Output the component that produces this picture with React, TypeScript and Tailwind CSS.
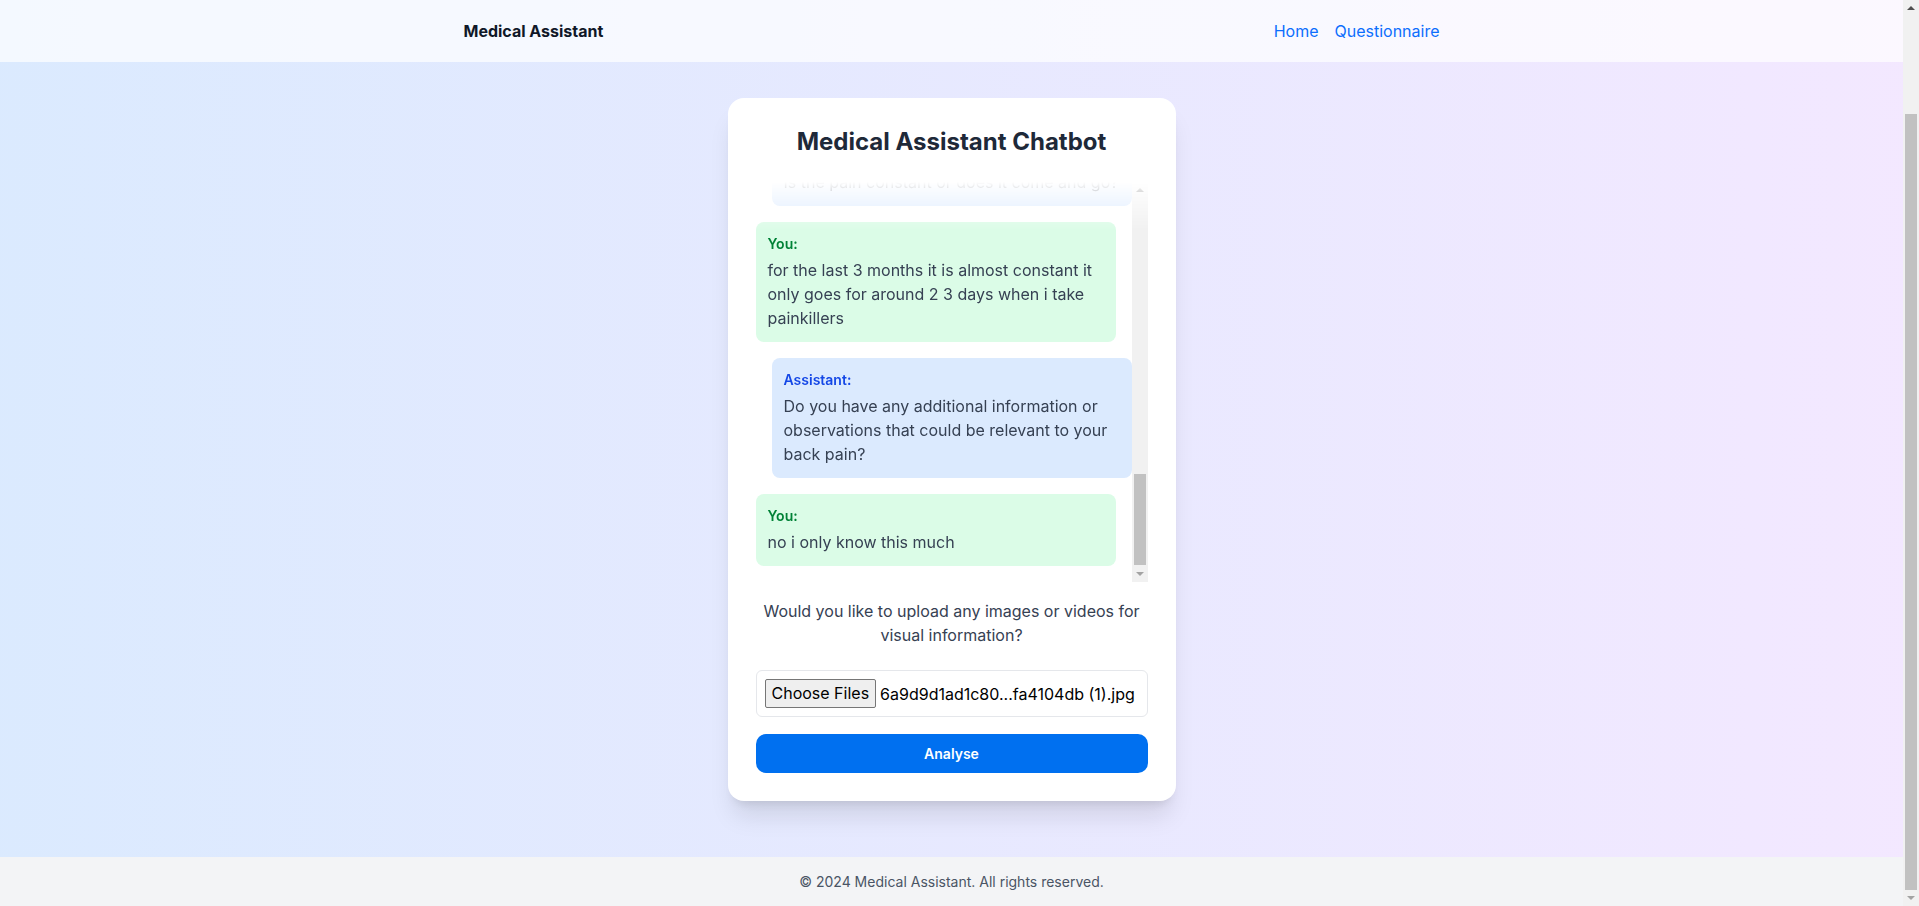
type Message = { role: "user" | "assistant"; text: string };

const messages: Message[] = [
    { role: "assistant", text: "Have you had any injuries or accidents that could have caused the pain?" },
    { role: "user", text: "no i don't remember any injury" },
    { role: "assistant", text: "Is the pain constant or does it come and go?" },
    {
        role: "user",
        text: "for the last 3 months it is almost constant it only goes for around 2 3 days when i take painkillers",
    },
    {
        role: "assistant",
        text: "Do you have any additional information or observations that could be relevant to your back pain?",
    },
    { role: "user", text: "no i only know this much" },
];

const ChatBubble = ({ message }: { message: Message }) => {
    const isUser = message.role === "user";
    return (
        <div className={isUser ? "mr-4 shrink-0 rounded-lg bg-green-100 p-3" : "ml-4 shrink-0 rounded-lg bg-blue-100 p-3"}>
            <p className={isUser ? "mb-1 text-sm font-semibold text-green-700" : "mb-1 text-sm font-semibold text-blue-700"}>
                {isUser ? "You:" : "Assistant:"}
            </p>
            <p className="text-base leading-6 text-gray-700">{message.text}</p>
        </div>
    );
};

// scrollbar drawn by hand (classic chromium look), scrolled to the end
const ArrowUp = ({ dim }: { dim?: boolean }) => (
    <div className="flex h-4 items-center justify-center">
        <div
            className={
                dim
                    ? "h-0 w-0 border-x-[4px] border-b-[4px] border-x-transparent border-b-[#a3a3a3]"
                    : "h-0 w-0 border-x-[4px] border-b-[4px] border-x-transparent border-b-[#505050]"
            }
        />
    </div>
);

const ArrowDown = ({ dim }: { dim?: boolean }) => (
    <div className="flex h-4 items-center justify-center">
        <div
            className={
                dim
                    ? "h-0 w-0 border-x-[4px] border-t-[4px] border-x-transparent border-t-[#a3a3a3]"
                    : "h-0 w-0 border-x-[4px] border-t-[4px] border-x-transparent border-t-[#505050]"
            }
        />
    </div>
);

export default function App() {
    return (
        <div className="flex h-screen overflow-hidden font-['Inter',sans-serif]">
            <div className="flex min-w-0 flex-1 flex-col bg-linear-to-r from-blue-100 to-purple-100">
                <header className="bg-white/70">
                    <div className="mx-auto flex h-[62px] max-w-5xl items-center justify-between px-6">
                        <span className="text-base font-bold text-gray-900">Medical Assistant</span>
                        <nav className="flex gap-4 text-base">
                            <a href="#" className="text-[#0d6efd]">Home</a>
                            <a href="#" className="text-[#0d6efd]">Questionnaire</a>
                        </nav>
                    </div>
                </header>

                <main className="flex flex-1 justify-center px-4 pt-[36px]">
                    <div className="h-fit w-full max-w-md rounded-2xl bg-white p-7 shadow-xl">
                        <h1 className="mb-6 text-center text-2xl font-bold text-gray-800">Medical Assistant Chatbot</h1>

                        <div className="flex h-[400px] [-webkit-mask-image:linear-gradient(to_bottom,transparent_0,black_48px)] [mask-image:linear-gradient(to_bottom,transparent_0,black_48px)]">
                            <div className="flex min-w-0 flex-1 flex-col justify-end gap-4 overflow-hidden pb-4">
                                {messages.map((m, i) => (
                                    <ChatBubble key={i} message={m} />
                                ))}
                            </div>
                            <div className="flex w-4 flex-col bg-[#f1f1f1]">
                                <ArrowUp />
                                <div className="h-[276px]" />
                                <div className="mx-[2px] h-[91px] bg-[#c1c1c1]" />
                                <div className="flex-1" />
                                <ArrowDown dim />
                            </div>
                        </div>

                        <p className="mt-[17px] text-center text-base leading-6 text-gray-700">
                            Would you like to upload any images or videos for visual information?
                        </p>

                        <div className="mt-[23px] flex items-center rounded-md border border-gray-200 bg-white p-2">
                            <button className="shrink-0 rounded-[2px] border border-[#767676] bg-[#efefef] px-[6px] py-[4px] text-base leading-[19px] text-black">
                                Choose Files
                            </button>
                            <span className="ml-1 truncate text-base text-black">6a9d9d1ad1c80...fa4104db (1).jpg</span>
                        </div>

                        <button className="mt-[17px] h-[39px] w-full rounded-[10px] bg-[#0070f0] text-sm font-semibold text-white">
                            Analyse
                        </button>
                    </div>
                </main>

                <footer className="flex h-[49px] shrink-0 items-center justify-center bg-gray-100 text-sm text-gray-600">
                    © 2024 Medical Assistant. All rights reserved.
                </footer>
            </div>

            <div className="flex w-4 shrink-0 flex-col bg-[#f1f1f1]">
                <ArrowUp />
                <div className="h-[98px]" />
                <div className="mx-[2px] flex-1 bg-[#c1c1c1]" />
                <ArrowDown dim />
            </div>
        </div>
    );
}
